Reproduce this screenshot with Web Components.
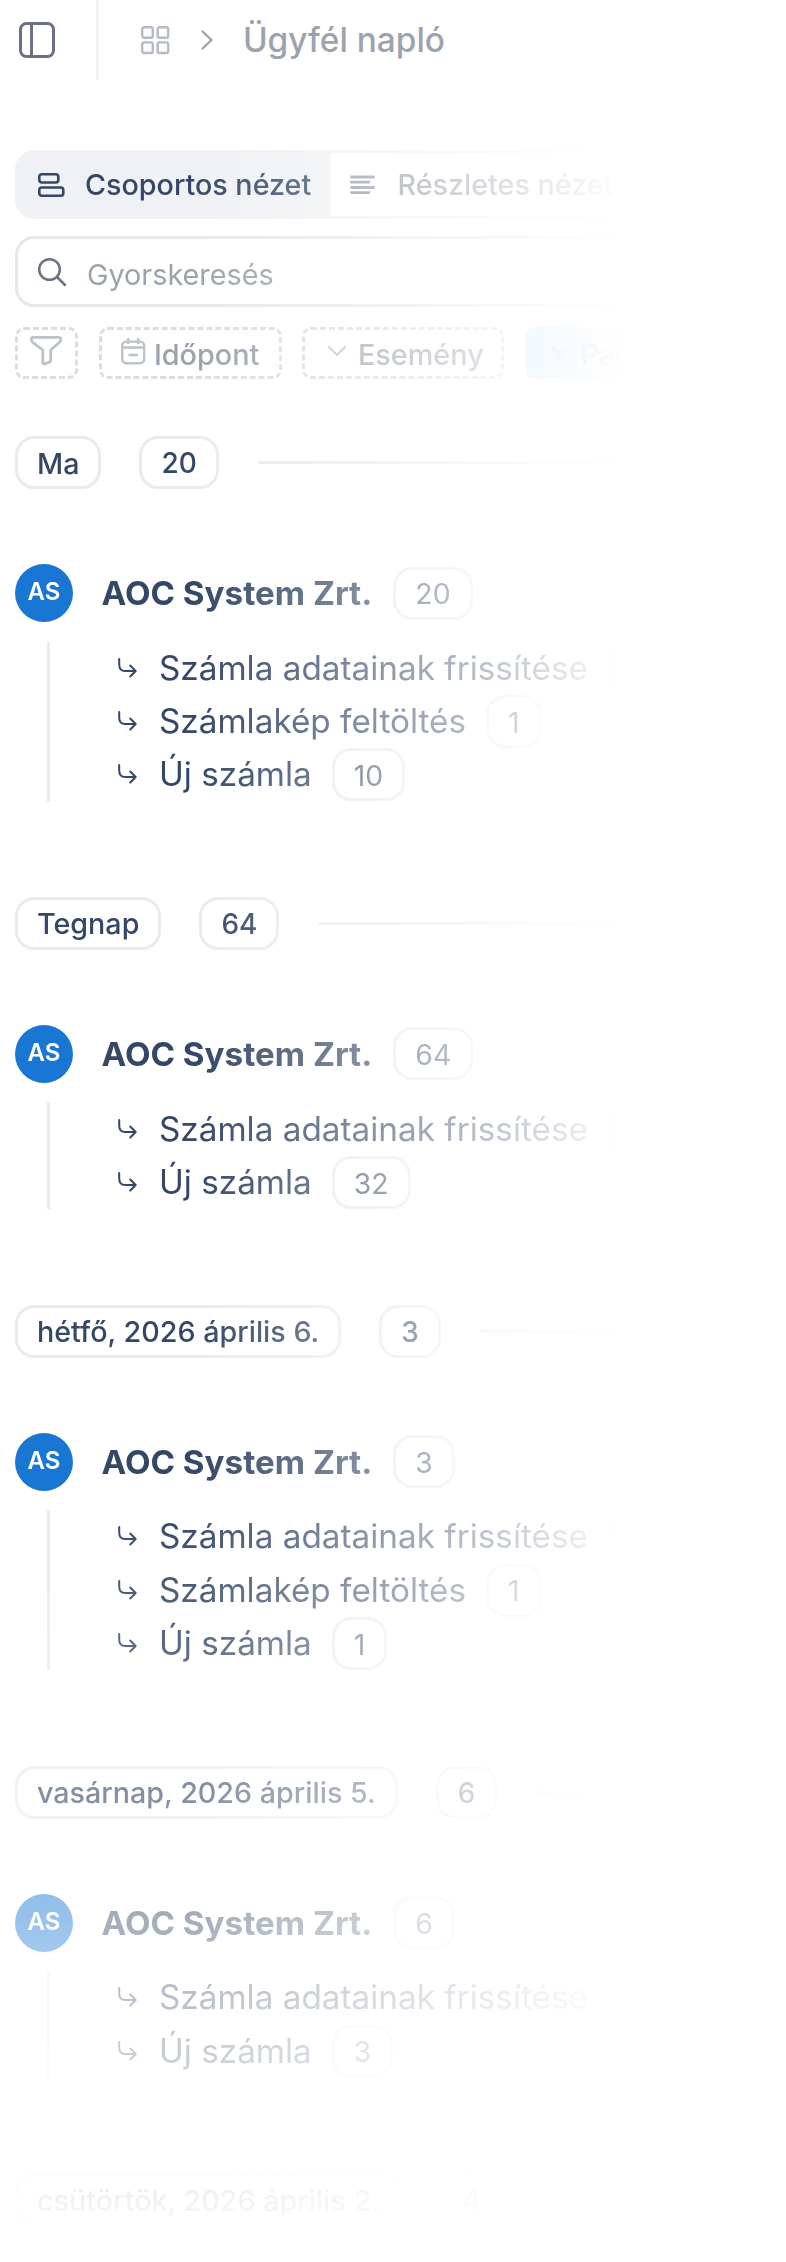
<!DOCTYPE html>
<html lang="hu">
<head>
<meta charset="utf-8">
<title>Ügyfél napló</title>
<style>
    html, body {
        margin: 0;
        background: #fff;
    }
    body {
        width: 786px;
        height: 2262px;
        overflow: hidden;
        font-family: Inter, "Liberation Sans", sans-serif;
        color: #344767;
    }
</style>
</head>
<body>
<log-page></log-page>

<script>
const icons = {
    sidebar: '<rect x="1.5" y="1.5" width="33" height="33" rx="6"/><path d="M12.5 2v32"/>',
    grid: '<rect x="1.2" y="1.2" width="10.6" height="10.6" rx="2"/><rect x="16.6" y="1.2" width="10.6" height="10.6" rx="2"/><rect x="1.2" y="16.4" width="10.6" height="10.6" rx="2"/><rect x="16.6" y="16.4" width="10.6" height="10.6" rx="2"/>',
    next: '<path d="M1.5 1.5l9 8.5-9 8.5"/>',
    group: '<rect x="1.3" y="1.3" width="19" height="8.2" rx="2.5"/><rect x="1.3" y="14.5" width="24" height="8.2" rx="2.5"/>',
    lines: '<path d="M1.5 2h22M1.5 7.2h17.5M1.5 12.5h22M1.5 17.7h17.5"/>',
    search: '<circle cx="11.5" cy="11.5" r="10.3"/><path d="M19 19l8 8"/>',
    filter: '<path d="M3 1.3h26c1.5 0 2 1.5 1.7 3-.3 1.200-1 1.8-1.7 2.5l-8.300 7.200v10.5c0 .8-.4 1.1-1 1.4l-5 2c-1 .4-1.900-.2-1.900-1.200V14L3.300 6.800C2.300 6 1.300 5 1.300 3.500c0-1.300.7-2.200 1.700-2.200z"/>',
    calendar: '<rect x="1.2" y="2.6" width="22" height="21.6" rx="4"/><path d="M1.5 8.5h21.5M7.2 0v4M17.2 0v4M8.5 16h7.5"/>',
    down: '<path d="M1 1l8 8 8-8"/>',
    sub: '<path d="M1.2 0v5.5c0 4 2 6.5 6 6.5h10.3M12.2 6.5l5.5 5.5-5.5 5.5"/>'
};

// width, height, stroke width
const sizes = {
    sidebar: [36, 36, 3],
    grid: [28.4, 28.4, 2.4],
    next: [12, 20, 2.4],
    group: [27, 24, 2.6],
    lines: [25, 20, 2.8],
    search: [28, 28, 2.5],
    filter: [32, 29, 2.8],
    calendar: [24.4, 25.4, 2.4],
    down: [18, 10, 2],
    sub: [19, 19, 2]
};

class LogIcon extends HTMLElement {
    constructor() {
        super();
        this.attachShadow({mode: 'open'});
    }

    connectedCallback() {
        const name = this.getAttribute('name');
        const [w, h, stroke] = sizes[name];
        this.shadowRoot.innerHTML = `
            <style>
                :host { display: block; flex: none; width: ${w}px; height: ${h}px; }
                svg { display: block; overflow: visible; }
            </style>
            <svg width="${w}" height="${h}" viewBox="0 0 ${w} ${h}" fill="none" stroke="currentColor"
                 stroke-width="${stroke}" stroke-linecap="round" stroke-linejoin="round">${icons[name]}</svg>
        `;
    }
}

class LogPill extends HTMLElement {
    constructor() {
        super();
        this.attachShadow({mode: 'open'});
        this.shadowRoot.innerHTML = `
            <style>
                :host {
                    display: flex;
                    flex: none;
                    align-items: center;
                    box-sizing: border-box;
                    height: 53px;
                    padding: 1px 19px 0;
                    border: 3px solid #e9ebef;
                    border-radius: 19px;
                    font-size: 28.7px;
                    font-weight: 500;
                    white-space: nowrap;
                }
                :host([number]) { font-size: 28px; }
                :host([plain]) {
                    font-size: 28.4px;
                    font-weight: 400;
                    color: #4d5d79;
                }
            </style>
            <slot></slot>
        `;
    }
}

class LogHeader extends HTMLElement {
    constructor() {
        super();
        this.attachShadow({mode: 'open'});
        this.shadowRoot.innerHTML = `
            <style>
                :host {
                    display: flex;
                    align-items: center;
                    box-sizing: border-box;
                    height: 80px;
                    padding-left: 18.5px;
                    color: #9ca3af;
                }
                .toggle { color: #6b7083; margin-right: 41px; }
                .line { width: 3px; height: 80px; background: #f3f3f8; margin-right: 42.5px; }
                .grid { color: #b4bbc7; margin-right: 31.5px; }
                .next { margin-right: 30px; }
                .title { font-size: 33.4px; font-weight: 500; }
            </style>
            <log-icon class="toggle" name="sidebar"></log-icon>
            <div class="line"></div>
            <log-icon class="grid" name="grid"></log-icon>
            <log-icon class="next" name="next"></log-icon>
            <span class="title"><slot></slot></span>
        `;
    }
}

class LogTabs extends HTMLElement {
    constructor() {
        super();
        this.attachShadow({mode: 'open'});
        this.shadowRoot.innerHTML = `
            <style>
                :host {
                    display: flex;
                    box-sizing: border-box;
                    height: 69px;
                    border: 3px solid #eff1f4;
                    border-radius: 20px;
                    overflow: hidden;
                    font-size: 28.7px;
                    font-weight: 500;
                }
                .tab { display: flex; align-items: center; white-space: nowrap; }
                .active { width: 312.5px; box-sizing: border-box; padding-left: 20px; background: #eff1f4; }
                .active log-icon { margin-right: 20px; }
                .other { padding-left: 19px; color: #8a919f; }
                .other log-icon { margin-right: 23px; }
            </style>
            <div class="tab active"><log-icon name="group"></log-icon><span>Csoportos nézet</span></div>
            <div class="tab other"><log-icon name="lines"></log-icon><span>Részletes nézet</span></div>
        `;
    }
}

class LogSearch extends HTMLElement {
    constructor() {
        super();
        this.attachShadow({mode: 'open'});
        this.shadowRoot.innerHTML = `
            <style>
                :host {
                    display: flex;
                    align-items: center;
                    box-sizing: border-box;
                    height: 71px;
                    margin-top: 17px;
                    padding-left: 20px;
                    border: 3px solid #e6e8ec;
                    border-radius: 19px;
                    font-size: 28.8px;
                    color: #9ca3af;
                }
                log-icon { color: #6b7280; margin-right: 21px; }
                span { padding-top: 5px; }
            </style>
            <log-icon name="search"></log-icon><span><slot></slot></span>
        `;
    }
}

class LogFilters extends HTMLElement {
    constructor() {
        super();
        this.attachShadow({mode: 'open'});
        this.shadowRoot.innerHTML = `
            <style>
                :host {
                    display: flex;
                    gap: 20.5px;
                    margin-top: 20px;
                    font-size: 28.8px;
                    font-weight: 500;
                    color: #9ca3af;
                }
                .chip {
                    display: flex;
                    flex: none;
                    box-sizing: border-box;
                    height: 52px;
                    border: 3px dashed #dadde2;
                    border-radius: 9px;
                    white-space: nowrap;
                }
                .chip span { line-height: 34px; padding-top: 7.5px; }
                log-icon { color: #bcc1ca; }
                .funnel { width: 63px; box-sizing: border-box; padding: 5.5px 0 0 12px; }
                .date { width: 183px; padding-left: 19px; }
                .date log-icon { margin: 9px 9px 0 0; }
                .event { width: 202px; padding-left: 23px; }
                .event log-icon, .partner log-icon { margin: 16px 12px 0 0; }
                .partner { width: 200px; padding-left: 23px; background: #d0e8fb; border-color: transparent; }
            </style>
            <div class="chip funnel"><log-icon name="filter"></log-icon></div>
            <div class="chip date"><log-icon name="calendar"></log-icon><span>Időpont</span></div>
            <div class="chip event"><log-icon name="down"></log-icon><span>Esemény</span></div>
            <div class="chip partner"><log-icon name="down"></log-icon><span>Partner</span></div>
        `;
    }
}

class LogItem extends HTMLElement {
    constructor() {
        super();
        this.attachShadow({mode: 'open'});
    }

    connectedCallback() {
        this.shadowRoot.innerHTML = `
            <style>
                :host {
                    display: flex;
                    align-items: center;
                    height: 53.4px;
                    font-size: 33.3px;
                    white-space: nowrap;
                }
                log-icon { margin-right: 22px; }
                span { flex: none; margin-right: 20px; margin-top: -1px; }
            </style>
            <log-icon name="sub"></log-icon><span><slot></slot></span>
            <log-pill plain>${this.getAttribute('count')}</log-pill>
        `;
    }
}

class LogGroup extends HTMLElement {
    constructor() {
        super();
        this.attachShadow({mode: 'open'});
    }

    connectedCallback() {
        const count = this.getAttribute('count');
        const client = this.getAttribute('client');
        this.shadowRoot.innerHTML = `
            <style>
                :host { display: block; margin-bottom: 94.8px; }
                .day { display: flex; align-items: center; height: 54px; }
                .day log-pill + log-pill { margin: 0 39px 0 38px; }
                .rule { flex: 1; height: 3px; background: #eaebef; }
                .client { display: flex; align-items: center; height: 58px; margin-top: 74.5px; white-space: nowrap; }
                .avatar {
                    width: 58px;
                    height: 58px;
                    border-radius: 50%;
                    background: #1976d2;
                    color: #fff;
                    font-size: 24px;
                    font-weight: 600;
                    line-height: 56px;
                    text-align: center;
                    margin-right: 28.5px;
                }
                .name { font-size: 33.2px; font-weight: 700; margin-right: 21px; }
                .items { margin: 19.5px 0 0 31.5px; padding-left: 68.5px; border-left: 3px solid #e9ebef; }
            </style>
            <div class="day">
                <log-pill>${this.getAttribute('day')}</log-pill>
                <log-pill number>${count}</log-pill>
                <div class="rule"></div>
            </div>
            ${client ? `
            <div class="client">
                <div class="avatar">AS</div>
                <div class="name">${client}</div>
                <log-pill plain>${count}</log-pill>
            </div>
            <div class="items"><slot></slot></div>` : ''}
        `;
    }
}

class LogPage extends HTMLElement {
    constructor() {
        super();
        this.attachShadow({mode: 'open'});
        this.shadowRoot.innerHTML = `
            <style>
                :host { display: block; }
                /* the list fades out towards the right edge and the bottom */
                .across {
                    -webkit-mask-image: linear-gradient(to right, #000 195px, transparent 628px);
                    mask-image: linear-gradient(to right, #000 195px, transparent 628px);
                }
                .down {
                    box-sizing: border-box;
                    height: 2182px;
                    padding: 70px 0 0 15px;
                    overflow: hidden;
                    -webkit-mask-image: linear-gradient(to bottom, #000 1420px, transparent 2176px);
                    mask-image: linear-gradient(to bottom, #000 1420px, transparent 2176px);
                }
                .groups { margin-top: 56.5px; }
            </style>
            <log-header>Ügyfél napló</log-header>
            <div class="across">
                <div class="down">
                    <log-tabs></log-tabs>
                    <log-search>Gyorskeresés</log-search>
                    <log-filters></log-filters>
                    <div class="groups">
                        <log-group day="Ma" count="20" client="AOC System Zrt.">
                            <log-item count="9">Számla adatainak frissítése</log-item>
                            <log-item count="1">Számlakép feltöltés</log-item>
                            <log-item count="10">Új számla</log-item>
                        </log-group>
                        <log-group day="Tegnap" count="64" client="AOC System Zrt.">
                            <log-item count="32">Számla adatainak frissítése</log-item>
                            <log-item count="32">Új számla</log-item>
                        </log-group>
                        <log-group day="hétfő, 2026 április 6." count="3" client="AOC System Zrt.">
                            <log-item count="1">Számla adatainak frissítése</log-item>
                            <log-item count="1">Számlakép feltöltés</log-item>
                            <log-item count="1">Új számla</log-item>
                        </log-group>
                        <log-group day="vasárnap, 2026 április 5." count="6" client="AOC System Zrt.">
                            <log-item count="3">Számla adatainak frissítése</log-item>
                            <log-item count="3">Új számla</log-item>
                        </log-group>
                        <log-group day="csütörtök, 2026 április 2." count="4"></log-group>
                    </div>
                </div>
            </div>
        `;
    }
}

customElements.define('log-icon', LogIcon);
customElements.define('log-pill', LogPill);
customElements.define('log-header', LogHeader);
customElements.define('log-tabs', LogTabs);
customElements.define('log-search', LogSearch);
customElements.define('log-filters', LogFilters);
customElements.define('log-item', LogItem);
customElements.define('log-group', LogGroup);
customElements.define('log-page', LogPage);
</script>
</body>
</html>
